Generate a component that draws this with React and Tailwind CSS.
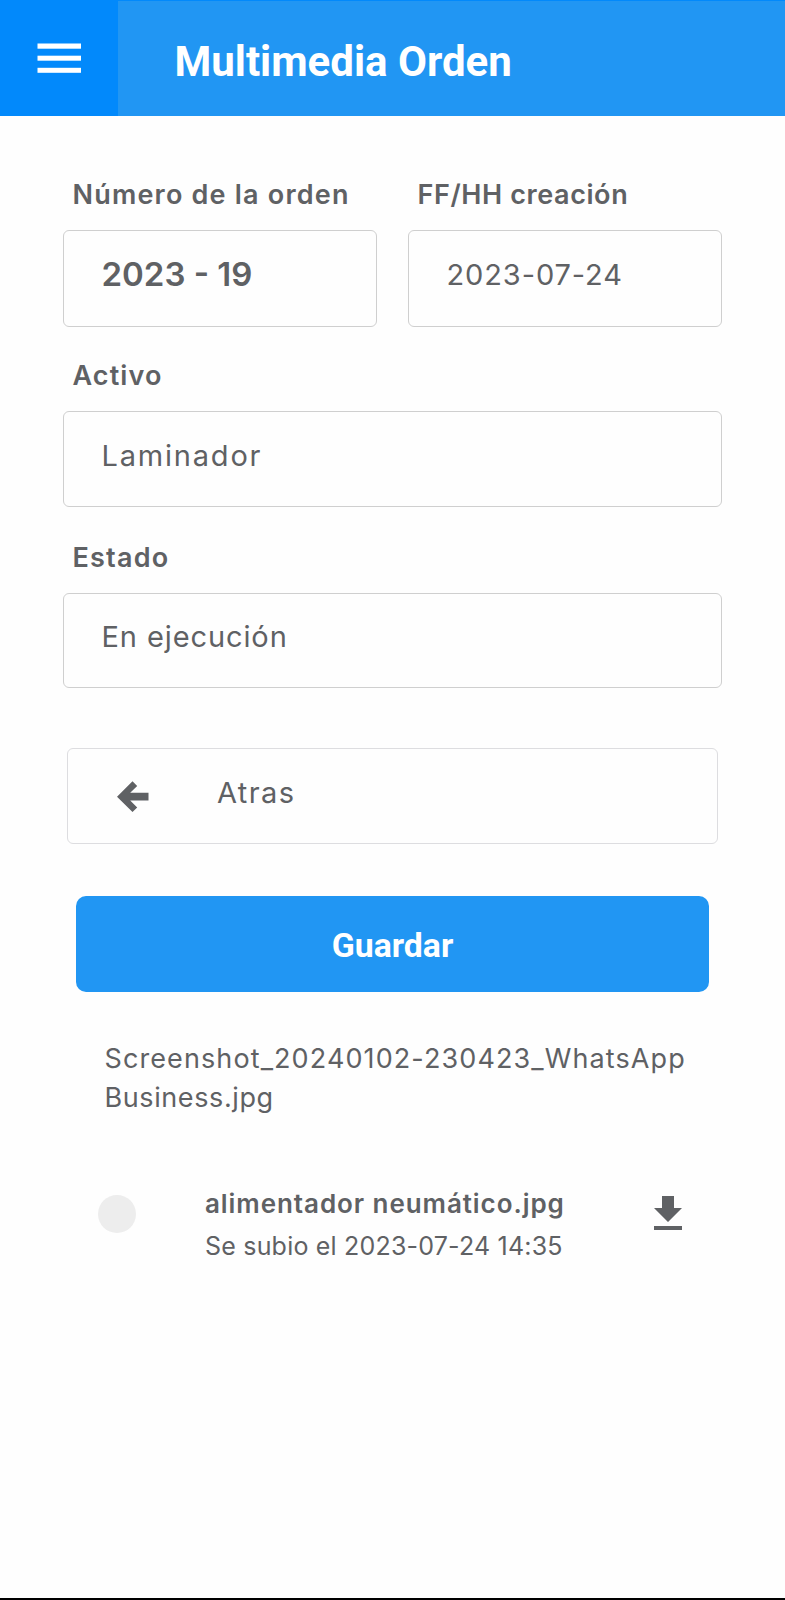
function MenuIcon() {
  return (
    <svg className="h-[30px] w-[44px]" viewBox="0 0 44 30" fill="#ffffff">
      <rect x="0.5" y="0.5" width="43.5" height="5.2" />
      <rect x="0.5" y="12.7" width="43.5" height="5" />
      <rect x="0.5" y="24.8" width="43.5" height="5" />
    </svg>
  );
}

function BackIcon() {
  return (
    <svg className="h-[32px] w-[32px]" viewBox="0 0 32 32" fill="#5f6164">
      <path d="M0 15.7 15.5 .3 20.2 5 13.2 11.8H31.5V19.6H13.2L20.2 26.4 15.5 31.1Z" />
    </svg>
  );
}

function DownloadIcon() {
  return (
    <svg className="h-12 w-12" viewBox="0 0 24 24" fill="#5f6164">
      <path d="M19 9h-4V3H9v6H5l7 7 7-7zM5 18v2h14v-2H5z" />
    </svg>
  );
}

function Label({ className, children }) {
  return (
    <div className={`h-10 whitespace-nowrap pl-[9.5px] text-[27px] font-semibold ${className}`}>
      {children}
    </div>
  );
}

function Field({ className, children }) {
  return (
    <div className={`whitespace-nowrap rounded-md border border-[#cfcfcf] pl-[37.5px] ${className}`}>
      {children}
    </div>
  );
}

export default function App() {
  return (
    <div className="flex h-[1600px] w-[785px] flex-col overflow-hidden border-b-2 border-black bg-[#fefefe] font-['Inter',sans-serif] text-[#5f6164]">
      <header className="flex h-[116px] shrink-0 bg-[#2196f3]">
        <div className="flex w-[118px] items-center justify-center bg-[#0289fb]">
          <MenuIcon />
        </div>
        <h1 className="flex-1 border-t border-[#0289fb] pl-[56.5px] pt-[1px] font-['Roboto',sans-serif] text-[42px] font-bold leading-[119px] text-white">
          Multimedia Orden
        </h1>
      </header>

      <main className="flex flex-col px-[63px] pt-[58px]">
        <div className="flex gap-[31px]">
          <div className="flex-1">
            <Label className="leading-[42px] tracking-[1.2px]">Número de la orden</Label>
            <Field className="mt-4 h-[97px] text-[33px] font-semibold leading-[86px]">2023 - 19</Field>
          </div>
          <div className="flex-1">
            <Label className="leading-[42px] tracking-[0.6px]">FF/HH creación</Label>
            <Field className="mt-4 h-[97px] text-[29px] leading-[88px] tracking-[0.9px]">2023-07-24</Field>
          </div>
        </div>

        <Label className="mt-[29px] leading-10 tracking-[1.1px]">Activo</Label>
        <Field className="mt-[15px] h-24 text-[29px] leading-[88px] tracking-[1.8px]">Laminador</Field>

        <Label className="mt-[31px] leading-[39px] tracking-[1.2px]">Estado</Label>
        <Field className="mt-[15px] h-[95px] text-[29px] leading-[86px] tracking-[0.9px]">En ejecución</Field>

        <button className="mx-1 mt-[60px] flex h-24 rounded-md border border-[#dddde0] pl-[49px] text-left">
          <span className="mt-8">
            <BackIcon />
          </span>
          <span className="pl-[68px] text-[29px] leading-[88px] tracking-[1.4px]">Atras</span>
        </button>

        <button className="mx-[13px] mt-[52px] h-24 rounded-[10px] bg-[#2196f3] text-center font-['Roboto',sans-serif] text-[33.8px] font-bold leading-[100px] text-white">
          Guardar
        </button>

        <div className="mt-[47px] whitespace-nowrap pl-[41.5px] text-[27px] leading-[39px]">
          <div className="tracking-[1.1px]">Screenshot_20240102-230423_WhatsApp</div>
          <div className="tracking-[0.6px]">Business.jpg</div>
        </div>

        <div className="mt-[65px] flex pl-[35px]">
          <div className="mt-[13px] h-[38px] w-[38px] rounded-full bg-[#ededed]" />
          <div className="w-[440px] whitespace-nowrap pl-[69px]">
            <div className="h-[43px] text-[26px] font-semibold leading-[43px] tracking-[0.93px]">
              alimentador neumático.jpg
            </div>
            <div className="text-[25px] leading-[43px] tracking-[0.2px]">Se subio el 2023-07-24 14:35</div>
          </div>
          <div className="ml-[68px] mt-[8px]">
            <DownloadIcon />
          </div>
        </div>
      </main>
    </div>
  );
}
